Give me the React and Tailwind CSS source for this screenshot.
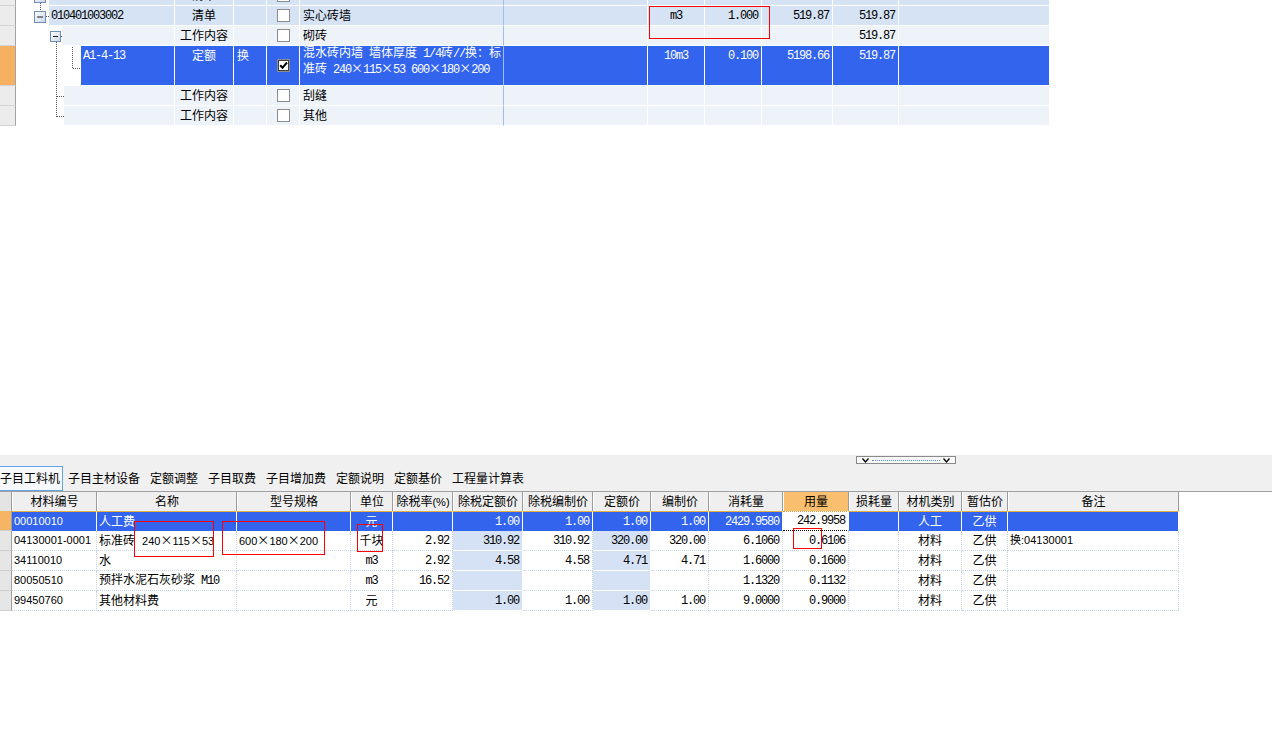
import React from "react";

const MONO = "font-['Liberation_Mono','Noto_Sans_CJK_SC',monospace] text-[12px] tracking-[-1.2px]";
const SANS = "font-['Liberation_Sans','Noto_Sans_CJK_SC',sans-serif]";
const X = () => <span className="font-['Noto_Sans_CJK_SC',sans-serif] text-[12px] tracking-normal">×</span>;

function CB({ checked }) {
  return (
    <div className="w-[13px] h-[13px] border border-[#8c8c8c] bg-white flex items-center justify-center shrink-0">
      {checked && (
        <div className="w-[11px] h-[11px] border border-[#404040] flex items-center justify-center">
          <svg width="9" height="9" viewBox="0 0 9 9">
            <path d="M1.2 4.3 L3.5 6.8 L8 1.5" stroke="#000" strokeWidth="2" fill="none" />
          </svg>
        </div>
      )}
    </div>
  );
}

const TOPW = ["w-[59px]", "w-[33px]", "w-[33px]", "w-[204px]", "w-[144px]", "w-[57px]", "w-[57px]", "w-[71px]", "w-[66px]", "w-[151px]"];
const TOPAL = ["justify-center", "justify-start pl-[3px]", "justify-start pl-[10px]", "justify-start pl-[3px]", "justify-start", "justify-center", "justify-end pr-[3px]", "justify-end pr-[3px]", "justify-end pr-[3px]", "justify-start"];

function TRow({ tall, treeW, c1w, bg, fg, orange, cells, vtop }) {
  const h = tall ? "h-[40px]" : "h-[20px]";
  return (
    <div className={`flex ${h}`}>
      <div className={`w-[16px] shrink-0 border-r border-r-[#a4a4a4] border-b border-b-[#d4d4d4] ${orange ? "bg-[#f6b062]" : "bg-[#ececec]"}`} />
      <div className={`${treeW} shrink-0 bg-white`} />
      <div className={`${c1w} shrink-0 ${bg} ${fg} border-r border-b border-white flex ${vtop ? "items-start pt-[1px]" : "items-center"} pl-[2px]`}>
        {cells[0]}
      </div>
      {TOPW.map((w, i) => (
        <div
          key={i}
          className={`${w} shrink-0 ${bg} ${fg} border-b border-white border-r ${i === 3 ? "border-r-[#9fbdea]" : "border-r-white"} flex ${
            vtop && i !== 2 ? "items-start pt-[1px]" : "items-center"
          } ${TOPAL[i]} overflow-hidden`}
        >
          {cells[i + 1]}
        </div>
      ))}
    </div>
  );
}

const BCOLS = [
  { w: "w-[85px]", t: "材料编号", a: "l" },
  { w: "w-[140px]", t: "名称", a: "l" },
  { w: "w-[114px]", t: "型号规格", a: "l" },
  { w: "w-[42px]", t: "单位", a: "c" },
  { w: "w-[60px]", t: "除税率(%)", a: "r" },
  { w: "w-[70px]", t: "除税定额价", a: "r" },
  { w: "w-[70px]", t: "除税编制价", a: "r" },
  { w: "w-[58px]", t: "定额价", a: "r" },
  { w: "w-[58px]", t: "编制价", a: "r" },
  { w: "w-[74px]", t: "消耗量", a: "r" },
  { w: "w-[66px]", t: "用量", a: "r" },
  { w: "w-[50px]", t: "损耗量", a: "r" },
  { w: "w-[63px]", t: "材机类别", a: "c" },
  { w: "w-[46px]", t: "暂估价", a: "c" },
  { w: "w-[171px]", t: "备注", a: "l" },
];

const m = (s) => <span className={MONO}>{s}</span>;
const sn = (s) => <span className={`${SANS} text-[11px]`}>{s}</span>;

const BROWS = [
  {
    sel: true,
    c: [sn("00010010"), "人工费", "", "元", "", m("1.00"), m("1.00"), m("1.00"), m("1.00"), m("2429.9580"), m("242.9958"), "", "人工", "乙供", ""],
  },
  {
    c: [
      sn("04130001-0001"),
      <span>
        标准砖
        <span className={`${SANS} text-[11px] ml-[7px]`}>
          240<X />115<X />53
        </span>
      </span>,
      <span className={`${SANS} text-[11px]`}>
        600<X />180<X />200
      </span>,
      "千块",
      m("2.92"),
      m("310.92"),
      m("310.92"),
      m("320.00"),
      m("320.00"),
      m("6.1060"),
      m("0.6106"),
      "",
      "材料",
      "乙供",
      sn("换:04130001"),
    ],
  },
  { c: [sn("34110010"), "水", "", m("m3"), m("2.92"), m("4.58"), m("4.58"), m("4.71"), m("4.71"), m("1.6000"), m("0.1600"), "", "材料", "乙供", ""] },
  {
    c: [
      sn("80050510"),
      <span>
        预拌水泥石灰砂浆<span className={MONO}> M10</span>
      </span>,
      "",
      m("m3"),
      m("16.52"),
      "",
      "",
      "",
      "",
      m("1.1320"),
      m("0.1132"),
      "",
      "材料",
      "乙供",
      "",
    ],
  },
  { c: [sn("99450760"), "其他材料费", "", "元", "", m("1.00"), m("1.00"), m("1.00"), m("1.00"), m("9.0000"), m("0.9000"), "", "材料", "乙供", ""] },
];

const ALIGN = { l: "justify-start pl-[2px]", c: "justify-center", r: "justify-end pr-[3px]" };

function Tree() {
  const dot = { stroke: "#555", strokeWidth: 1, strokeDasharray: "1 1" };
  const box = (x, y, s, k) => (
    <g key={k}>
      <rect x={x + 0.5} y={y + 0.5} width={s} height={s} fill="url(#bx)" stroke="#6f8fb4" />
      <line x1={x + 3} x2={x + s - 2} y1={y + s / 2 + 0.5} y2={y + s / 2 + 0.5} stroke="#1a1a1a" />
    </g>
  );
  return (
    <svg className="absolute left-0 top-0" width="100" height="127">
      <defs>
        <linearGradient id="bx" x1="0" y1="0" x2="1" y2="1">
          <stop offset="0" stopColor="#ffffff" />
          <stop offset="1" stopColor="#c9d5e6" />
        </linearGradient>
      </defs>
      {box(34, -9, 11, "a")}
      <line x1="40.5" x2="40.5" y1="3" y2="11" {...dot} />
      {box(34, 11, 11, "b")}
      <line x1="46" x2="49" y1="16.5" y2="16.5" {...dot} />
      {box(50, 31, 10, "c")}
      <line x1="61" x2="63" y1="36.5" y2="36.5" {...dot} />
      <line x1="56.5" x2="56.5" y1="42" y2="117" {...dot} />
      <line x1="57" x2="64" y1="96.5" y2="96.5" {...dot} />
      <line x1="57" x2="64" y1="116.5" y2="116.5" {...dot} />
      <line x1="72.5" x2="72.5" y1="47" y2="68" {...dot} />
      <line x1="73" x2="81" y1="68.5" y2="68.5" {...dot} />
    </svg>
  );
}

export default function App() {
  const TABS = ["子目工料机", "子目主材设备", "定额调整", "子目取费", "子目增加费", "定额说明", "定额基价", "工程量计算表"];
  const lb = "bg-[#d5e3f5]";
  const pb = "bg-[#eef3fa]";
  return (
    <div className={`relative w-[1272px] h-[730px] bg-white overflow-hidden text-[12px] text-black ${SANS}`}>
      {/* top tree grid */}
      <div className="relative h-[127px] overflow-hidden">
        <div className="-mt-[14px]">
          <TRow treeW="w-[33px]" c1w="w-[126px]" bg={lb} fg="" cells={["", "清单", "", <CB />, "", "", "", "", "", "", ""]} />
          <TRow
            treeW="w-[33px]"
            c1w="w-[126px]"
            bg={lb}
            fg=""
            cells={[m("010401003002"), "清单", "", <CB />, "实心砖墙", "", m("m3"), m("1.000"), m("519.87"), m("519.87"), ""]}
          />
          <TRow treeW="w-[46px]" c1w="w-[113px]" bg={pb} fg="" cells={["", "工作内容", "", <CB />, "砌砖", "", "", "", "", m("519.87"), ""]} />
          <TRow
            tall
            vtop
            orange
            treeW="w-[65px]"
            c1w="w-[94px]"
            bg="bg-[#3264ee]"
            fg="text-white"
            cells={[
              m("A1-4-13"),
              "定额",
              "换",
              <CB checked />,
              <div className="leading-[13px]">
                <div className="whitespace-nowrap">
                  混水砖内墙<span className={MONO}> </span>墙体厚度<span className={MONO}> 1/4</span>砖<span className={MONO}>//</span>换：标
                </div>
                <div className="whitespace-nowrap">
                  准砖<span className={MONO}> 240</span>
                  <X />
                  <span className={MONO}>115</span>
                  <X />
                  <span className={MONO}>53 600</span>
                  <X />
                  <span className={MONO}>180</span>
                  <X />
                  <span className={MONO}>200</span>
                </div>
              </div>,
              "",
              m("10m3"),
              m("0.100"),
              m("5198.66"),
              m("519.87"),
              "",
            ]}
          />
          <TRow treeW="w-[48px]" c1w="w-[111px]" bg={pb} fg="" cells={["", "工作内容", "", <CB />, "刮缝", "", "", "", "", "", ""]} />
          <TRow treeW="w-[48px]" c1w="w-[111px]" bg={pb} fg="" cells={["", "工作内容", "", <CB />, "其他", "", "", "", "", "", ""]} />
        </div>
        <Tree />
      </div>

      {/* blank middle */}
      <div className="h-[328px]" />

      {/* tab band */}
      <div className="h-[37px] bg-[#f0f0f0] border-b border-b-[#a0a0a0]">
        <div className="h-[11px] pt-[1px] pl-[856px]">
          <div className="w-[100px] h-[8px] border border-[#8a8a8a] bg-[#f8f8f8] flex items-center justify-between px-[5px]">
            <svg width="7" height="5" viewBox="0 0 7 5">
              <path d="M0.5 0.5 L3.5 4 L6.5 0.5" stroke="#000" strokeWidth="1.3" fill="none" />
            </svg>
            <div className="flex-1 mx-[3px] border-t border-dotted border-[#5a8ae0]" />
            <svg width="7" height="5" viewBox="0 0 7 5">
              <path d="M0.5 0.5 L3.5 4 L6.5 0.5" stroke="#000" strokeWidth="1.3" fill="none" />
            </svg>
          </div>
        </div>
        <div className="flex h-[25px] items-stretch">
          {TABS.map((t, i) => (
            <div
              key={t}
              className={`flex items-center whitespace-nowrap ${
                i === 0 ? "border border-[#5fa6e6] bg-[#f6f8fb] pr-[2px] -ml-[1px]" : "px-[5px]"
              }`}
            >
              {t}
            </div>
          ))}
        </div>
      </div>

      {/* bottom table header */}
      <div className="flex h-[19px]">
        <div className="w-[12px] shrink-0 bg-[#e4e4e4] border-r border-r-[#9c9c9c]" />
        {BCOLS.map((c, i) => (
          <div
            key={i}
            className={`${c.w} shrink-0 ${i === 10 ? "bg-[#f9bf6e]" : "bg-[#efefef]"} border-r border-r-[#9c9c9c] border-l border-l-white flex items-center justify-center whitespace-nowrap`}
          >
            {i === 4 ? (
              <span>
                除税率<span className="text-[11px]">(%)</span>
              </span>
            ) : (
              c.t
            )}
          </div>
        ))}
      </div>

      {/* bottom rows */}
      {BROWS.map((r, ri) => (
        <div key={ri} className="flex h-[20px]">
          <div
            className={`w-[12px] shrink-0 border-r border-r-[#a0a0a0] border-b border-b-[#cfcfcf] ${r.sel ? "bg-[#f6b465]" : "bg-[#e6e6e6]"}`}
          />
          {BCOLS.map((c, ci) => {
            let cls;
            if (r.sel) {
              if (ci === 10) {
                cls = "bg-white text-black border-t border-t-[#e0a040] border-dotted border-b border-b-black border-r border-r-white";
              } else {
                cls = "bg-[#3264ee] text-white border-t border-dotted border-t-[#e6b040] border-r border-solid border-r-white";
              }
            } else if ((ci === 5 || ci === 7) && ri > 0) {
              cls = "bg-[#d5e1f5] border-r border-b border-white";
            } else {
              cls = "bg-white border-r border-b border-dotted border-[#c8d4ee]";
            }
            return (
              <div key={ci} className={`${c.w} shrink-0 ${cls} flex items-center ${ALIGN[c.a]} whitespace-nowrap overflow-hidden`}>
                {r.c[ci]}
              </div>
            );
          })}
        </div>
      ))}

      {/* red annotation boxes */}
      <div className="absolute left-[649px] top-[6px] w-[121px] h-[33px] border border-[#ff0000]" />
      <div className="absolute left-[134px] top-[521px] w-[80px] h-[36px] border border-[#ff0000]" />
      <div className="absolute left-[222px] top-[521px] w-[103px] h-[34px] border border-[#ff0000]" />
      <div className="absolute left-[357px] top-[524px] w-[26px] h-[28px] border border-[#ff0000]" />
      <div className="absolute left-[793px] top-[528px] w-[29px] h-[21px] border border-[#ff0000]" />
    </div>
  );
}
